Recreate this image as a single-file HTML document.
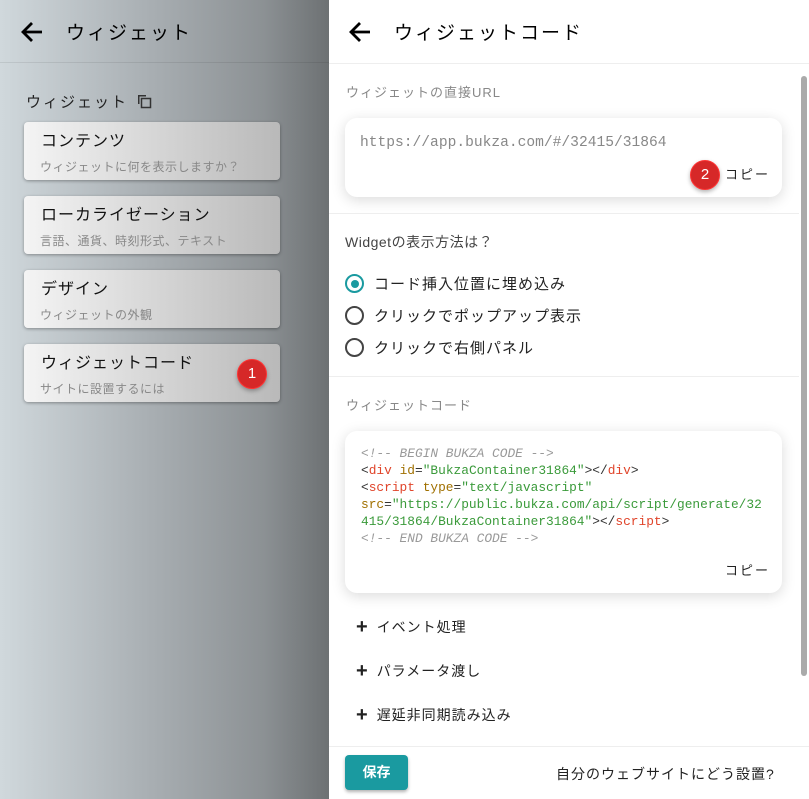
<!DOCTYPE html>
<html><head><meta charset="utf-8"><style>
*{box-sizing:border-box;margin:0;padding:0}
body{width:809px;height:799px;overflow:hidden;font-family:"Liberation Sans","Noto Sans CJK JP",sans-serif;position:relative;background:#fff}
.left{position:absolute;left:0;top:0;width:329px;height:799px;background:linear-gradient(90deg,#d0d8dc 0%,#a9afb3 45%,#8c9194 80%,#6d7173 100%)}
.lh{position:absolute;left:0;top:0;width:329px;height:63px;border-bottom:1px solid rgba(0,0,0,.08)}
.t{position:absolute;white-space:nowrap}
.card{position:absolute;left:24px;width:256px;height:58px;border-radius:4px;background:linear-gradient(90deg,#f4f4f4,#b9b9b9);box-shadow:0 1px 3px rgba(0,0,0,.35)}
.card .a{position:absolute;left:17px;top:5px;font-size:16px;color:#111;letter-spacing:1px}
.card .b{position:absolute;left:16px;top:36px;font-size:12px;color:#888;letter-spacing:.5px}
.badge{position:absolute;width:30px;height:30px;border-radius:50%;background:#d62828;border:1.5px solid #f33;color:#fff;font-size:15px;text-align:center;line-height:27px;box-shadow:0 2px 4px rgba(0,0,0,.3)}
.right{position:absolute;left:329px;top:0;width:480px;height:799px;background:#fff}
.box{position:absolute;left:16px;width:437px;background:#fff;border-radius:12px;box-shadow:0 3px 14px rgba(0,0,0,.15)}
.hr{position:absolute;left:0;width:470px;height:1px;background:#eee}
.radio{position:absolute;left:16px;width:19px;height:19px;border-radius:50%;border:2px solid #444}
.code{font-family:"Liberation Mono",monospace;font-size:12.85px;line-height:17.1px;position:absolute;left:16px;top:14px;color:#333;white-space:pre}
.c{color:#999;font-style:italic}.r{color:#e0442a}.y{color:#a07000}.g{color:#3a9a3a}
.plus{font-weight:900;font-size:20px;margin-right:8px;vertical-align:-1px}
.acc{position:absolute;left:27px;font-size:14px;color:#222;letter-spacing:1px}
</style></head><body>
<div class="left">
 <div class="lh">
  <svg class="t" style="left:20px;top:20px" width="24" height="24" viewBox="0 0 24 24"><path d="M22 12H4M12 3l-9 9 9 9" stroke="#000" stroke-width="2.8" fill="none"/></svg>
  <div class="t" style="left:66px;top:18px;font-size:19px;letter-spacing:2px;color:#000">ウィジェット</div>
 </div>
 <div class="t" style="left:26px;top:91px;font-size:15px;letter-spacing:2px;color:#222">ウィジェット</div>
 <svg class="t" style="left:137px;top:94px" width="15" height="15" viewBox="0 0 15 15"><path d="M1 1h8v1.5H2.5V10H1z" fill="#333"/><rect x="4.5" y="4.5" width="9" height="9" stroke="#333" stroke-width="1.5" fill="none"/></svg>
 <div class="card" style="top:122px"><div class="a">コンテンツ</div><div class="b">ウィジェットに何を表示しますか？</div></div>
 <div class="card" style="top:196px"><div class="a">ローカライゼーション</div><div class="b">言語、通貨、時刻形式、テキスト</div></div>
 <div class="card" style="top:270px"><div class="a">デザイン</div><div class="b">ウィジェットの外観</div></div>
 <div class="card" style="top:344px"><div class="a">ウィジェットコード</div><div class="b">サイトに設置するには</div></div>
 <div class="badge" style="left:237px;top:359px">1</div>
</div>
<div class="right">
 <svg class="t" style="left:19px;top:20px" width="24" height="24" viewBox="0 0 24 24"><path d="M22 12H4M12 3l-9 9 9 9" stroke="#000" stroke-width="2.8" fill="none"/></svg>
 <div class="t" style="left:65px;top:18px;font-size:19px;letter-spacing:2px;color:#000">ウィジェットコード</div>
 <div class="hr" style="top:63px;width:480px"></div>
 <div class="t" style="left:17px;top:82px;font-size:13px;color:#888;letter-spacing:1px">ウィジェットの直接URL</div>
 <div class="box" style="top:118px;height:79px">
  <div class="t" style="left:15px;top:17px;font-family:'Liberation Mono',monospace;font-size:14.6px;color:#888">https://app.bukza.com/#/32415/31864</div>
  <div class="t" style="right:12px;top:46px;font-size:13px;letter-spacing:2px;color:#222">コピー</div>
 </div>
 <div class="badge" style="left:361px;top:160px">2</div>
 <div class="hr" style="top:213px"></div>
 <div class="t" style="left:16px;top:232px;font-size:14px;color:#444;letter-spacing:.5px">Widgetの表示方法は？</div>
 <div class="radio" style="top:274px;border-color:#1a9aa0"><div style="position:absolute;left:3.5px;top:3.5px;width:8px;height:8px;border-radius:50%;background:#1a9aa0"></div></div>
 <div class="t" style="left:45px;top:273px;font-size:15px;color:#222;letter-spacing:1px">コード挿入位置に埋め込み</div>
 <div class="radio" style="top:306px"></div>
 <div class="t" style="left:45px;top:305px;font-size:15px;color:#222;letter-spacing:1px">クリックでポップアップ表示</div>
 <div class="radio" style="top:338px"></div>
 <div class="t" style="left:45px;top:337px;font-size:15px;color:#222;letter-spacing:1px">クリックで右側パネル</div>
 <div class="hr" style="top:376px"></div>
 <div class="t" style="left:17px;top:395px;font-size:13px;color:#888;letter-spacing:1px">ウィジェットコード</div>
 <div class="box" style="top:431px;height:162px">
<div class="code"><span class="c">&lt;!-- BEGIN BUKZA CODE --&gt;</span>
&lt;<span class="r">div</span> <span class="y">id</span>=<span class="g">"BukzaContainer31864"</span>&gt;&lt;/<span class="r">div</span>&gt;
&lt;<span class="r">script</span> <span class="y">type</span>=<span class="g">"text/javascript"</span>
<span class="y">src</span>=<span class="g">"https://public.bukza.com/api/script/generate/32</span>
<span class="g">415/31864/BukzaContainer31864"</span>&gt;&lt;/<span class="r">script</span>&gt;
<span class="c">&lt;!-- END BUKZA CODE --&gt;</span></div>
  <div class="t" style="right:12px;top:129px;font-size:13px;letter-spacing:2px;color:#222">コピー</div>
 </div>
 <div class="acc" style="top:616px"><span class="plus">+</span>イベント処理</div>
 <div class="acc" style="top:660px"><span class="plus">+</span>パラメータ渡し</div>
 <div class="acc" style="top:704px"><span class="plus">+</span>遅延非同期読み込み</div>
 <div style="position:absolute;left:472px;top:76px;width:6px;height:600px;background:#aaa;border-radius:3px"></div>
 <div class="hr" style="top:746px;width:480px"></div>
 <div style="position:absolute;left:16px;top:755px;width:63px;height:35px;background:#1a9aa0;border-radius:4px;color:#fff;font-size:14px;font-weight:bold;text-align:center;line-height:35px;box-shadow:0 2px 3px rgba(0,0,0,.3)">保存</div>
 <div class="t" style="left:227px;top:764px;font-size:14px;color:#222;letter-spacing:1px">自分のウェブサイトにどう設置?</div>
</div>
</body></html>
